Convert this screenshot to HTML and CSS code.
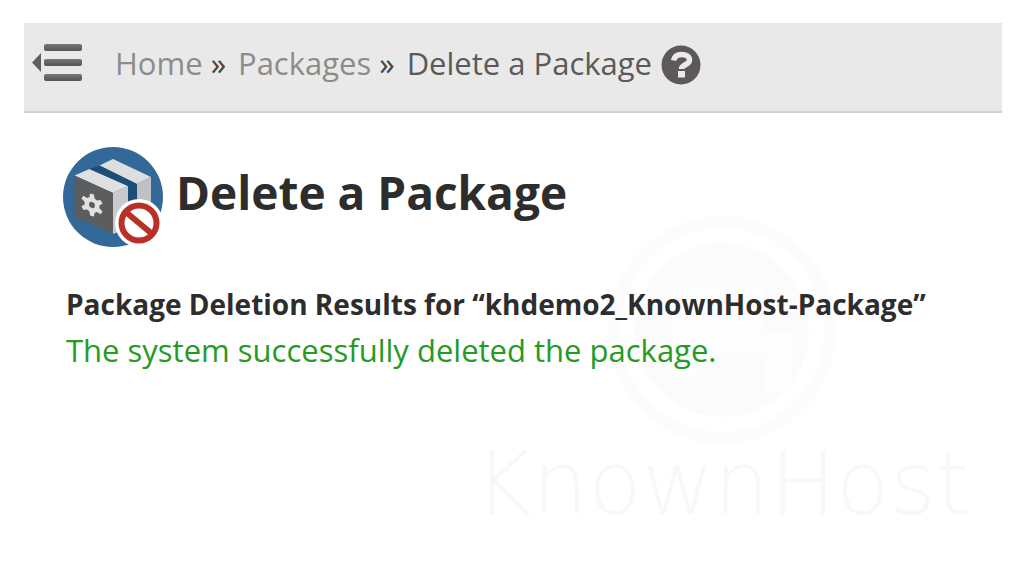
FILE: index.html
```html
<!DOCTYPE html>
<html lang="en">
<head>
<meta charset="utf-8">
<meta name="viewport" content="width=device-width, initial-scale=1">
<title>Delete a Package</title>
<link rel="stylesheet" href="styles.css">
</head>
<body>
<div class="page">
  <header class="topbar">
    <button class="menu-toggle" type="button" aria-label="Collapse menu">
      <svg width="52" height="40" viewBox="0 0 52 40" aria-hidden="true">
        <defs><linearGradient id="bar" x1="0" y1="0" x2="0" y2="1"><stop offset="0" stop-color="#777"/><stop offset="1" stop-color="#555"/></linearGradient></defs>
        <path d="M9 10v19L0 19.500z" fill="#606060"/>
        <g fill="url(#bar)"><rect x="12" y="1" width="38" height="7" rx="2"/><rect x="12" y="16" width="38" height="7" rx="2"/><rect x="12" y="31" width="38" height="7" rx="2"/></g>
      </svg>
    </button>
    <nav class="breadcrumb" aria-label="Breadcrumb">
      <a href="#">Home</a><span class="separator">»</span>
      <a href="#">Packages</a><span class="separator">»</span>
      <span class="current">Delete a Package</span>
    </nav>
    <button class="help" type="button" aria-label="Help">
      <svg width="40" height="40" viewBox="0 0 40 40" aria-hidden="true">
        <circle cx="20" cy="20" r="19.500" fill="#5d595a"/>
        <path d="M12.500 15.500C13.500 11 16.500 9.500 20.500 9.500c5 0 8 2.300 8 5.500 0 5-8 4.500-8 9" fill="none" stroke="#ebebeb" stroke-width="5.500"/>
        <rect x="17" y="26" width="7" height="6.500" fill="#ebebeb"/>
      </svg>
    </button>
  </header>
  <main class="content">
    <div class="title-row">
      <svg class="package-icon" width="102" height="102" viewBox="0 0 102 102" aria-hidden="true">
        <circle cx="51" cy="51" r="50" fill="#336998"/>
        <path d="M12.500 29.500 27.500 23 66 40 51 47z" fill="#dfe0e1"/>
        <path d="M51 47 66 40V82L51 88z" fill="#c9cacc"/>
        <path d="M12.500 29.500 51 47V88L12.500 71z" fill="#5c5d5e"/>
        <path d="M37.500 19.500 51 13 89 31 75 38z" fill="#dddedf"/>
        <path d="M75 38 89 31V70L75 74z" fill="#bfc2c4"/>
        <path d="M27.500 23 37.500 19.500 75 38V74L66 80V40z" fill="#1c4e78"/>
        <g transform="translate(30 59) skewY(14)" fill="#e2e2e2">
          <circle r="7.500"/>
          <path d="M-2-11h4l1.500 11-1.500 11h-4L-3.500 0z"/>
          <path d="M-2-11h4l1.500 11-1.500 11h-4L-3.500 0z" transform="rotate(60)"/>
          <path d="M-2-11h4l1.500 11-1.500 11h-4L-3.500 0z" transform="rotate(120)"/>
          <circle r="3" fill="#5c5d5e"/>
        </g>
        <circle cx="77" cy="77" r="24" fill="#fff"/>
        <circle cx="77" cy="77" r="17.500" fill="none" stroke="#b93028" stroke-width="6"/>
        <path d="M65 67 89 87" stroke="#b93028" stroke-width="6"/>
      </svg>
      <h1 class="title">Delete a Package</h1>
    </div>
    <section class="results">
      <h2 class="results-title">Package Deletion Results for “khdemo2_KnownHost-Package”</h2>
      <p class="success">The system successfully deleted the package.</p>
    </section>
    <div class="watermark" aria-hidden="true">
      <svg width="236" height="236" viewBox="0 0 236 236">
        <circle cx="118" cy="118" r="108" fill="none" stroke="#fcfcfc" stroke-width="12"/>
        <circle cx="118" cy="118" r="87" fill="#fbfbfb"/>
        <path d="M68 76h91v44h29v60h-28v-38H98v28H68z" fill="#fdfdfd"/>
      </svg>
      <span class="wordmark">KnownHost</span>
    </div>
  </main>
</div>
</body>
</html>
```
FILE: styles.css
```css
* { box-sizing: border-box; }
body {
  margin: 0;
  background: #fff;
  color: #2d2d2d;
  font-family: "Open Sans", "Noto Sans", sans-serif;
}
h1, h2, p { margin: 0; }
button {
  display: flex;
  padding: 0;
  border: 0;
  background: none;
  cursor: pointer;
}
.page {
  position: relative;
  min-height: 100vh;
  padding: 23px 22px 0 24px;
}
.topbar {
  display: flex;
  align-items: center;
  padding: 16px 8px 24px;
  border-bottom: 2px solid #d2d2d2;
  background: #e9e9e9;
}
.breadcrumb {
  display: flex;
  gap: 12px;
  margin-left: 31px;
  color: #5a5a5a;
  font-size: 31px;
  line-height: 48px;
}
.breadcrumb a {
  color: #8c8c8c;
  text-decoration: none;
}
.separator {
  margin-left: -4px;
  color: #444;
}
.help {
  margin-left: 9px;
  padding-top: 4px;
}
.content { padding: 33px 38px; }
.title-row {
  display: flex;
  align-items: center;
  gap: 12px;
}
.title {
  padding-bottom: 10px;
  font-size: 46px;
  font-weight: 700;
  line-height: 64px;
}
.results { padding: 34px 4px 0; }
.results-title {
  font-size: 28px;
  font-weight: 700;
  line-height: 44px;
}
.success {
  color: #259a25;
  font-size: 31px;
  line-height: 48px;
}
.watermark {
  position: absolute;
  right: 54px;
  top: 212px;
  z-index: -1;
  display: flex;
  flex-direction: column;
  align-items: center;
}
.wordmark {
  color: #f8f8f8;
  font-family: "DejaVu Sans", sans-serif;
  font-size: 88px;
  font-weight: 200;
  line-height: 72px;
}
```
